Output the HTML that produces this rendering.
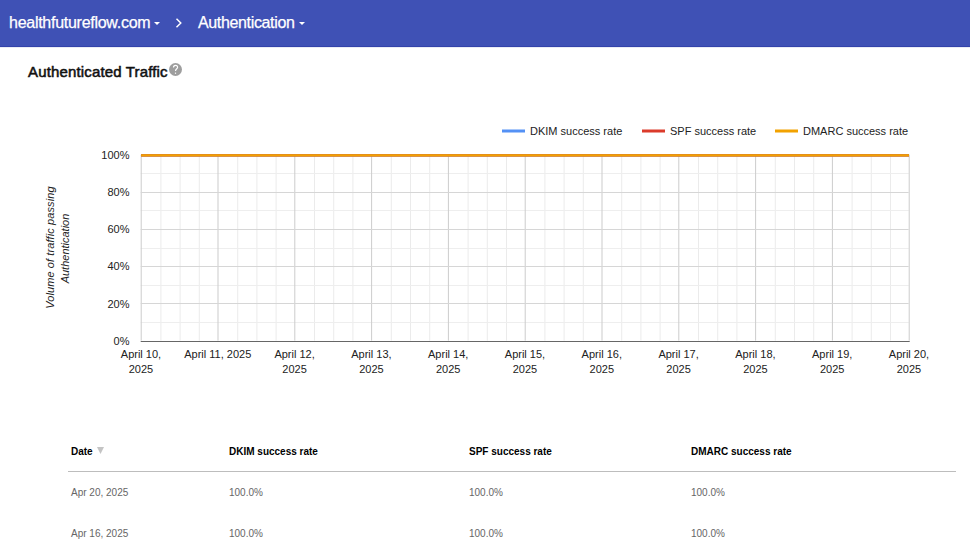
<!DOCTYPE html>
<html><head><meta charset="utf-8">
<style>
html,body{margin:0;padding:0;background:#fff;width:970px;height:552px;overflow:hidden;position:relative;font-family:"Liberation Sans",sans-serif;}
.bar{position:absolute;left:0;top:0;width:970px;height:46px;background:#3f51b5;border-bottom:1px solid #3343aa;box-shadow:0 1px 0 rgba(40,55,160,0.1);}
.crumb{position:absolute;top:0;height:46px;line-height:46px;font-size:16px;color:#fff;-webkit-text-stroke:0.25px #fff;white-space:nowrap;}
.c1{left:9px;letter-spacing:-0.27px;}
.c2{left:198px;letter-spacing:-0.35px;}
.caret{position:absolute;width:0;height:0;border-left:3px solid transparent;border-right:3px solid transparent;border-top:3px solid #fff;}
.title{position:absolute;left:28px;top:61.8px;line-height:20px;font-size:15px;font-weight:normal;color:#111;letter-spacing:0.15px;-webkit-text-stroke:0.55px #111;white-space:nowrap;}
.help{position:absolute;left:169px;top:63px;width:13px;height:13px;border-radius:50%;background:#9e9e9e;}
svg.chart{position:absolute;left:0;top:0;}
svg.chart text{font-family:"Liberation Sans",sans-serif;font-size:11px;fill:#222222;}
.th{position:absolute;top:446px;line-height:12px;font-size:10px;font-weight:bold;color:#000;white-space:nowrap;}
.td{position:absolute;line-height:12px;font-size:10px;color:#666;white-space:nowrap;}
.hr{position:absolute;left:68px;top:471px;width:888px;height:1px;background:#bdbdbd;}
.sort{position:absolute;left:97px;top:447px;width:0;height:0;border-left:3.5px solid transparent;border-right:3.5px solid transparent;border-top:7px solid #c4c4c4;}
</style></head><body>
<div class="bar">
  <div class="crumb c1">healthfutureflow.com</div>
  <div class="caret" style="left:154px;top:22px"></div>
  <svg style="position:absolute;left:174.5px;top:18px" width="8" height="10" viewBox="0 0 8 10"><path d="M1.5,0.8 L5.8,5 L1.5,9.2" stroke="#fff" stroke-width="1.45" fill="none"/></svg>
  <div class="crumb c2">Authentication</div>
  <div class="caret" style="left:298.5px;top:22px"></div>
</div>
<div class="title">Authenticated Traffic</div>
<div class="help"><svg width="13" height="13" viewBox="0 0 13 13" style="position:absolute;left:0;top:0"><path d="M4.5,4.6 C4.5,3.2 5.3,2.3 6.5,2.3 C7.7,2.3 8.6,3.1 8.6,4.3 C8.6,5.6 6.5,6.0 6.5,7.9" stroke="#fff" stroke-width="1.15" fill="none"/><rect x="5.9" y="9.6" width="1.2" height="1.2" fill="#fff"/></svg></div>
<svg class="chart" width="970" height="400" viewBox="0 0 970 400">
<rect x="160.40" y="154.60" width="1" height="186.0" fill="#ebebeb"/>
<rect x="179.60" y="154.60" width="1" height="186.0" fill="#ebebeb"/>
<rect x="198.80" y="154.60" width="1" height="186.0" fill="#ebebeb"/>
<rect x="237.20" y="154.60" width="1" height="186.0" fill="#ebebeb"/>
<rect x="256.40" y="154.60" width="1" height="186.0" fill="#ebebeb"/>
<rect x="275.60" y="154.60" width="1" height="186.0" fill="#ebebeb"/>
<rect x="314.00" y="154.60" width="1" height="186.0" fill="#ebebeb"/>
<rect x="333.20" y="154.60" width="1" height="186.0" fill="#ebebeb"/>
<rect x="352.40" y="154.60" width="1" height="186.0" fill="#ebebeb"/>
<rect x="390.80" y="154.60" width="1" height="186.0" fill="#ebebeb"/>
<rect x="410.00" y="154.60" width="1" height="186.0" fill="#ebebeb"/>
<rect x="429.20" y="154.60" width="1" height="186.0" fill="#ebebeb"/>
<rect x="467.60" y="154.60" width="1" height="186.0" fill="#ebebeb"/>
<rect x="486.80" y="154.60" width="1" height="186.0" fill="#ebebeb"/>
<rect x="506.00" y="154.60" width="1" height="186.0" fill="#ebebeb"/>
<rect x="544.40" y="154.60" width="1" height="186.0" fill="#ebebeb"/>
<rect x="563.60" y="154.60" width="1" height="186.0" fill="#ebebeb"/>
<rect x="582.80" y="154.60" width="1" height="186.0" fill="#ebebeb"/>
<rect x="621.20" y="154.60" width="1" height="186.0" fill="#ebebeb"/>
<rect x="640.40" y="154.60" width="1" height="186.0" fill="#ebebeb"/>
<rect x="659.60" y="154.60" width="1" height="186.0" fill="#ebebeb"/>
<rect x="698.00" y="154.60" width="1" height="186.0" fill="#ebebeb"/>
<rect x="717.20" y="154.60" width="1" height="186.0" fill="#ebebeb"/>
<rect x="736.40" y="154.60" width="1" height="186.0" fill="#ebebeb"/>
<rect x="774.80" y="154.60" width="1" height="186.0" fill="#ebebeb"/>
<rect x="794.00" y="154.60" width="1" height="186.0" fill="#ebebeb"/>
<rect x="813.20" y="154.60" width="1" height="186.0" fill="#ebebeb"/>
<rect x="851.60" y="154.60" width="1" height="186.0" fill="#ebebeb"/>
<rect x="870.80" y="154.60" width="1" height="186.0" fill="#ebebeb"/>
<rect x="890.00" y="154.60" width="1" height="186.0" fill="#ebebeb"/>
<rect x="140.70" y="173.00" width="768.0" height="1" fill="#eeeeee"/>
<rect x="140.70" y="210.00" width="768.0" height="1" fill="#eeeeee"/>
<rect x="140.70" y="248.00" width="768.0" height="1" fill="#eeeeee"/>
<rect x="140.70" y="285.00" width="768.0" height="1" fill="#eeeeee"/>
<rect x="140.70" y="322.00" width="768.0" height="1" fill="#eeeeee"/>
<rect x="140.70" y="154.60" width="1" height="186.0" fill="#cccccc"/>
<rect x="217.50" y="154.60" width="1" height="186.0" fill="#cccccc"/>
<rect x="294.30" y="154.60" width="1" height="186.0" fill="#cccccc"/>
<rect x="371.10" y="154.60" width="1" height="186.0" fill="#cccccc"/>
<rect x="447.90" y="154.60" width="1" height="186.0" fill="#cccccc"/>
<rect x="524.70" y="154.60" width="1" height="186.0" fill="#cccccc"/>
<rect x="601.50" y="154.60" width="1" height="186.0" fill="#cccccc"/>
<rect x="678.30" y="154.60" width="1" height="186.0" fill="#cccccc"/>
<rect x="755.10" y="154.60" width="1" height="186.0" fill="#cccccc"/>
<rect x="831.90" y="154.60" width="1" height="186.0" fill="#cccccc"/>
<rect x="908.70" y="154.60" width="1" height="186.0" fill="#cccccc"/>
<rect x="140.70" y="155.00" width="768.0" height="1" fill="#d6d6d6"/>
<rect x="140.70" y="192.00" width="768.0" height="1" fill="#d6d6d6"/>
<rect x="140.70" y="229.00" width="768.0" height="1" fill="#d6d6d6"/>
<rect x="140.70" y="266.00" width="768.0" height="1" fill="#d6d6d6"/>
<rect x="140.70" y="303.00" width="768.0" height="1" fill="#d6d6d6"/>
<rect x="140.70" y="341" width="769.0" height="1" fill="#666666"/>
<path d="M141.1,155.35 L909,155.35" stroke="#5491f5" stroke-width="2.4" fill="none"/>
<path d="M141.1,155.35 L909,155.35" stroke="#db3b2b" stroke-width="2.4" fill="none"/>
<path d="M141.1,155.35 L909,155.35" stroke="#f2a200" stroke-width="2.4" fill="none"/>
<text x="129.5" y="344.80" text-anchor="end">0%</text>
<text x="129.5" y="307.60" text-anchor="end">20%</text>
<text x="129.5" y="270.40" text-anchor="end">40%</text>
<text x="129.5" y="233.20" text-anchor="end">60%</text>
<text x="129.5" y="196.00" text-anchor="end">80%</text>
<text x="129.5" y="158.80" text-anchor="end">100%</text>
<text x="141.00" y="357.8" text-anchor="middle">April 10,</text>
<text x="141.00" y="372.8" text-anchor="middle">2025</text>
<text x="217.80" y="357.8" text-anchor="middle">April 11, 2025</text>
<text x="294.60" y="357.8" text-anchor="middle">April 12,</text>
<text x="294.60" y="372.8" text-anchor="middle">2025</text>
<text x="371.40" y="357.8" text-anchor="middle">April 13,</text>
<text x="371.40" y="372.8" text-anchor="middle">2025</text>
<text x="448.20" y="357.8" text-anchor="middle">April 14,</text>
<text x="448.20" y="372.8" text-anchor="middle">2025</text>
<text x="525.00" y="357.8" text-anchor="middle">April 15,</text>
<text x="525.00" y="372.8" text-anchor="middle">2025</text>
<text x="601.80" y="357.8" text-anchor="middle">April 16,</text>
<text x="601.80" y="372.8" text-anchor="middle">2025</text>
<text x="678.60" y="357.8" text-anchor="middle">April 17,</text>
<text x="678.60" y="372.8" text-anchor="middle">2025</text>
<text x="755.40" y="357.8" text-anchor="middle">April 18,</text>
<text x="755.40" y="372.8" text-anchor="middle">2025</text>
<text x="832.20" y="357.8" text-anchor="middle">April 19,</text>
<text x="832.20" y="372.8" text-anchor="middle">2025</text>
<text x="909.00" y="357.8" text-anchor="middle">April 20,</text>
<text x="909.00" y="372.8" text-anchor="middle">2025</text>
<rect x="502" y="129.5" width="23" height="3" fill="#5491f5"/>
<text x="530" y="135" fill="#222222">DKIM success rate</text>
<rect x="642" y="129.5" width="23" height="3" fill="#db3b2b"/>
<text x="670" y="135" fill="#222222">SPF success rate</text>
<rect x="775" y="129.5" width="23" height="3" fill="#f2a200"/>
<text x="803" y="135" fill="#222222">DMARC success rate</text>
<text transform="translate(54,247.6) rotate(-90)" text-anchor="middle" font-style="italic" letter-spacing="0.1">Volume of traffic passing</text>
<text transform="translate(69,248.5) rotate(-90)" text-anchor="middle" font-style="italic">Authentication</text>
</svg>
<div class="th" style="left:71px">Date</div>
<svg style="position:absolute;left:0;top:0" width="120" height="470"><polygon points="97,447 104,447 100.5,454" fill="#c4c4c4"/></svg>
<div class="th" style="left:229px">DKIM success rate</div>
<div class="th" style="left:469px">SPF success rate</div>
<div class="th" style="left:691px">DMARC success rate</div>
<div class="hr"></div>
<div class="td" style="left:71px;top:487px">Apr 20, 2025</div>
<div class="td" style="left:229px;top:487px">100.0%</div>
<div class="td" style="left:469px;top:487px">100.0%</div>
<div class="td" style="left:691px;top:487px">100.0%</div>
<div class="td" style="left:71px;top:528px">Apr 16, 2025</div>
<div class="td" style="left:229px;top:528px">100.0%</div>
<div class="td" style="left:469px;top:528px">100.0%</div>
<div class="td" style="left:691px;top:528px">100.0%</div>
</body></html>
